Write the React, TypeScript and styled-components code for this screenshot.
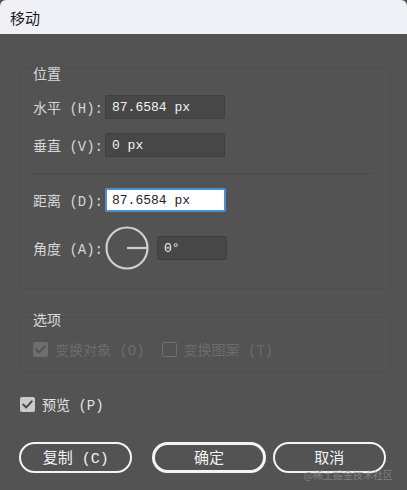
import styled, { createGlobalStyle } from "styled-components";

const GlobalStyle = createGlobalStyle`
  html, body {
    margin: 0;
    padding: 0;
    background: #535353;
  }
  * {
    box-sizing: border-box;
  }
`;

const Dialog = styled.div`
  position: relative;
  width: 407px;
  height: 490px;
  background: #535353;
  font-family: "Liberation Mono", "Noto Sans CJK SC", monospace;
  color: #d8d8d8;
  overflow: hidden;
`;

const TitleBar = styled.div`
  height: 34px;
  display: flex;
  align-items: center;
  padding-left: 10px;
  background: #eff1f6;
  border-radius: 6px 6px 0 0;
  color: #1c1c1c;
  font-family: "Noto Sans CJK SC", sans-serif;
  font-size: 15px;
`;

const Body = styled.div`
  display: flex;
  flex-direction: column;
  padding: 19px 21px 0 20px;
`;

const Group = styled.fieldset<{ $top?: number; $pad: string }>`
  margin: ${(p) => p.$top ?? 0}px 0 0 0;
  padding: ${(p) => p.$pad};
  border: 1px solid #4e4e4e;
  border-right-color: #595959;
  min-width: 0;
`;

const Legend = styled.legend<{ $drop: number }>`
  padding: ${(p) => p.$drop}px 0 0 0;
  line-height: 20px;
  font-size: 14px;
  color: #dadada;
  font-family: "Noto Sans CJK SC", sans-serif;
`;

const Rows = styled.div`
  display: flex;
  flex-direction: column;
  gap: 14px;
`;

const Row = styled.div`
  display: flex;
  align-items: center;
  min-height: 24px;
`;

const Label = styled.span`
  width: 72px;
  flex: none;
  font-size: 14px;
  color: #d6d6d6;
  white-space: nowrap;
`;

const Field = styled.div<{ $w: number; $focused?: boolean }>`
  width: ${(p) => p.$w}px;
  height: 24px;
  display: flex;
  align-items: center;
  padding-left: ${(p) => (p.$focused ? 5 : 6)}px;
  font-size: 13px;
  background: ${(p) => (p.$focused ? "#ffffff" : "#474747")};
  color: ${(p) => (p.$focused ? "#1e1e1e" : "#f2f2f2")};
  border: ${(p) => (p.$focused ? "2px solid #4d8fd6" : "1px solid #3f3f3f")};
  border-radius: 2px;
  white-space: nowrap;
`;

const Separator = styled.div`
  height: 1px;
  margin: 2px 0 0 0;
  background: #4a4a4a;
`;

const Dial = styled.svg`
  flex: none;
  margin-right: 8px;
`;

const OptionRow = styled.div`
  display: flex;
  align-items: center;
  height: 20px;
`;

const Check = styled.span<{ $checked?: boolean; $dim?: boolean }>`
  width: 15px;
  height: 15px;
  flex: none;
  display: flex;
  align-items: center;
  justify-content: center;
  border-radius: 2px;
  background: ${(p) =>
    p.$checked ? (p.$dim ? "#6e6e6e" : "#cbcbcb") : "transparent"};
  border: ${(p) => (p.$checked ? "none" : "1.5px solid #707070")};
`;

const OptionText = styled.span<{ $dim?: boolean; $gap: number }>`
  margin-left: 7px;
  margin-right: ${(p) => p.$gap}px;
  font-size: 14px;
  color: ${(p) => (p.$dim ? "#6c6c6c" : "#e2e2e2")};
  white-space: nowrap;
`;

const PreviewRow = styled(OptionRow)`
  margin-top: 22px;
`;

const Buttons = styled.div`
  display: flex;
  gap: 7px;
  margin: 28px 0 0 -1px;
`;

const Button = styled.button<{ $primary?: boolean }>`
  appearance: none;
  width: 114px;
  height: 31px;
  margin-left: ${(p) => (p.$primary ? 13 : 0)}px;
  border-radius: 16px;
  border: ${(p) => (p.$primary ? "3px" : "2px")} solid #f4f4f4;
  background: transparent;
  color: #f2f2f2;
  font-family: "Liberation Mono", "Noto Sans CJK SC", monospace;
  font-size: 15px;
  padding: 0 0 2px 0;
  cursor: pointer;
`;

const Watermark = styled.span`
  position: absolute;
  right: 14px;
  bottom: 9px;
  font-family: "Noto Sans CJK SC", sans-serif;
  font-size: 10px;
  line-height: 12px;
  color: rgba(150, 150, 150, 0.7);
`;

function CheckMark({ color }: { color: string }) {
  return (
    <svg width="11" height="9" viewBox="0 0 11 9">
      <path
        d="M1.2 4.6 L4.2 7.4 L9.8 1.4"
        fill="none"
        stroke={color}
        strokeWidth="2"
        strokeLinecap="round"
        strokeLinejoin="round"
      />
    </svg>
  );
}

export default function App() {
  return (
    <Dialog>
      <GlobalStyle />
      <TitleBar>移动</TitleBar>
      <Body>
        <Group $pad="12px 12px 18px 12px">
          <Legend $drop={10}>位置</Legend>
          <Rows>
            <Row>
              <Label>水平 (H):</Label>
              <Field $w={120}>87.6584 px</Field>
            </Row>
            <Row>
              <Label>垂直 (V):</Label>
              <Field $w={120}>0 px</Field>
            </Row>
            <Separator />
            <Row>
              <Label>距离 (D):</Label>
              <Field $w={121} $focused>
                87.6584 px
              </Field>
            </Row>
            <Row>
              <Label>角度 (A):</Label>
              <Dial width="44" height="44" viewBox="0 0 44 44">
                <circle cx="22" cy="22" r="20.5" fill="none" stroke="#cfcfcf" strokeWidth="2.2" />
                <line x1="22" y1="22" x2="42" y2="22" stroke="#cfcfcf" strokeWidth="2.2" />
              </Dial>
              <Field $w={70}>0°</Field>
            </Row>
          </Rows>
        </Group>

        <Group $top={16} $pad="10px 12px 12px 12px">
          <Legend $drop={4}>选项</Legend>
          <OptionRow>
            <Check $checked $dim>
              <CheckMark color="#525252" />
            </Check>
            <OptionText $dim $gap={17}>
              变换对象 (O)
            </OptionText>
            <Check />
            <OptionText $dim $gap={0}>
              变换图案 (T)
            </OptionText>
          </OptionRow>
        </Group>

        <PreviewRow>
          <Check $checked>
            <CheckMark color="#474747" />
          </Check>
          <OptionText $gap={0}>预览 (P)</OptionText>
        </PreviewRow>

        <Buttons>
          <Button>复制 (C)</Button>
          <Button $primary>确定</Button>
          <Button>取消</Button>
        </Buttons>
      </Body>
      <Watermark>@稀土掘金技术社区</Watermark>
    </Dialog>
  );
}
